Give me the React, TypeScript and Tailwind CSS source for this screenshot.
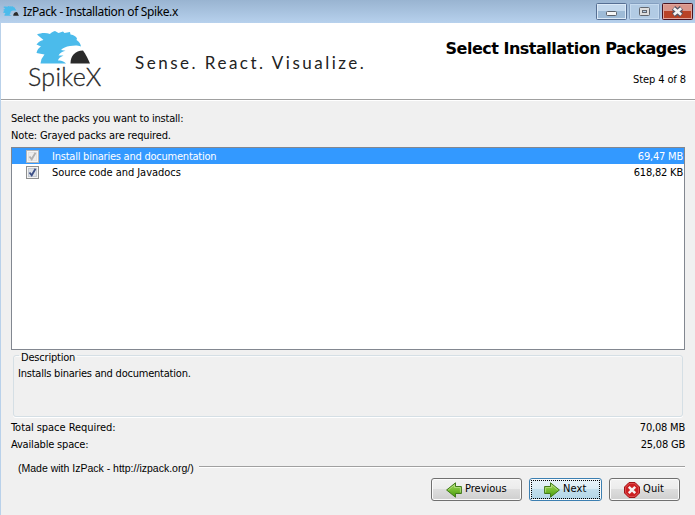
import React from "react";

const Hedgehog = ({ className }: { className: string }) => (
  <svg className={className} viewBox="0 0 54 33" preserveAspectRatio="none">
    <path
      fill="#4bbbeb"
      d="M4.5 32.5 L5.5 28 L8.5 23.5 L.5 22 C1 19 2.5 17 5 15.5 L.5 13.5 C3 10.5 5 9.5 7.5 9 L1 3.5 C5 1.8 10 1.5 14 3 C15 1.5 17 .5 19 0 L22.5 2 L27 .5 L28.5 2 L34 1 L34.5 3.5 C38 4 40 5.5 41 7.5 L40.5 9 C43 10.5 44.5 12.5 45 15.5 C41 14 38 14.5 34 15 C30 15.5 27 17 25 19 L29.5 19.8 C26 20.5 24 22 22.5 24.5 L27.5 24.5 C24 26 22.5 27.5 22 29.5 C24 29.5 28 30 30 32.5 Z"
    />
    <path fill="#2b2b2b" d="M34.5 32.5 C34.5 25 39 19.5 47 19.5 C49.5 22.5 52 28 54 32.5 Z" />
  </svg>
);

const Check = ({ color, soft }: { color: string; soft?: boolean }) => (
  <svg className="block h-[13px] w-[13px] shrink-0" viewBox="0 0 13 13">
    <rect x=".5" y=".5" width="12" height="12" fill="#f4f4f4" stroke={soft ? "#b5b5b5" : "#8e8f8f"} />
    <rect x="2.5" y="2.5" width="8" height="8" fill={soft ? "#ededed" : "#dde1e7"} stroke={soft ? "#e2e2e2" : "#c3c9d1"} />
    <path d="M3.5 6.5 L5.7 9.3 L9.5 2.8" fill="none" stroke={color} strokeWidth="1.8" />
  </svg>
);

const Arrow = ({ flip }: { flip?: boolean }) => (
  <svg className={flip ? "h-4 w-4 shrink-0 -scale-x-100" : "h-4 w-4 shrink-0"} viewBox="0 0 16 16">
    <defs>
      <linearGradient id="leaf" x1="0" y1="0" x2="0" y2="1">
        <stop offset="0" stopColor="#a2d762" />
        <stop offset=".5" stopColor="#76bd31" />
        <stop offset="1" stopColor="#479a0b" />
      </linearGradient>
    </defs>
    <path d="M.6 4.5 H6.5 V.8 L15.4 8 L6.5 15.2 V11.5 H.6 Z" fill="url(#leaf)" stroke="#42791b" />
    <path d="M1.6 10.5 V5.5 H7.5 V2.9 L13.8 8" fill="none" stroke="#b9e088" strokeWidth=".8" />
  </svg>
);

const Stop = () => (
  <svg className="h-4 w-4 shrink-0" viewBox="0 0 16 16">
    <path d="M5 .5 H11 L15.5 5 V11 L11 15.5 H5 L.5 11 V5 Z" fill="#cc1f22" stroke="#a01316" />
    <path d="M5.3 1.5 H10.7 L14.5 5.3 V10.7 L10.7 14.5 H5.3 L1.5 10.7 V5.3 Z" fill="none" stroke="#e05557" strokeWidth=".8" />
    <path d="M4.8 4.8 L11.2 11.2 M11.2 4.8 L4.8 11.2" stroke="#f6f0f0" strokeWidth="2.5" />
  </svg>
);

const shell = "flex items-center rounded-[3px] border shadow-[inset_0_0_0_1px_#fbfbfb]";
const gray = "border-[#707070] bg-[linear-gradient(#f2f2f2,#ebebeb_50%,#dddddd_50%,#cfcfcf)]";

export default function App() {
  return (
    <div className="flex h-[515px] w-[695px] flex-col overflow-hidden bg-[#f0f0f0] font-['DejaVu_Sans_Condensed','DejaVu_Sans',sans-serif] text-[11px] leading-[17px] whitespace-nowrap text-black">
      <div className="flex h-[23px] shrink-0 bg-linear-to-b from-[#99b4d1] to-[#b7d1ed] pl-[3px]">
        <Hedgehog className="mt-[6px] h-[10px] w-4" />
        <span className="mt-[3px] ml-[4px] font-['Noto_Sans',sans-serif] text-[12px] tracking-[-0.37px]">IzPack - Installation of Spike.x</span>
        <div className="mt-[3px] mr-[2px] ml-auto flex gap-[2px]">
          <svg className="h-[17px] w-[31px]" viewBox="0 0 31 17">
            <rect x=".5" y=".5" width="30" height="16" rx="1" fill="#c3d8ed" stroke="#566f93" />
            <rect x="1.5" y="8" width="28" height="7.5" fill="#9ebbd7" />
            <rect x="1.5" y="1.5" width="28" height="14" fill="none" stroke="#dbe9f7" />
            <rect x="10.5" y="8.5" width="10" height="4" rx="1" fill="#f6f6f6" stroke="#5a6069" />
          </svg>
          <svg className="h-[17px] w-[31px]" viewBox="0 0 31 17">
            <rect x=".5" y=".5" width="30" height="16" rx="1" fill="#b2cbe4" stroke="#849fc0" />
            <rect x="1.5" y="1.5" width="28" height="14" fill="none" stroke="#c5daef" />
            <rect x="10.5" y="4.5" width="10" height="8" rx="1" fill="#dedede" stroke="#62676f" />
            <rect x="13.5" y="7.5" width="4" height="2" fill="#b2cbe4" stroke="#62676f" />
          </svg>
          <svg className="h-[17px] w-[31px]" viewBox="0 0 31 17">
            <rect x=".5" y=".5" width="30" height="16" rx="1" fill="#d9968b" stroke="#4a1420" />
            <rect x="1" y="8" width="29" height="8" fill="#b94327" />
            <rect x="1.5" y="1.5" width="28" height="14" fill="none" stroke="#e0a69c" />
            <path d="M11.5 5 L19.5 12 M19.5 5 L11.5 12" stroke="#535666" strokeWidth="5" />
            <path d="M11.8 5.3 L19.2 11.7 M19.2 5.3 L11.8 11.7" stroke="#f4f4f4" strokeWidth="2.7" />
          </svg>
        </div>
      </div>

      <div className="flex flex-1 flex-col border-l border-[#b9d1ea]">
        <header className="flex h-[77px] shrink-0 border-b border-[#a0a0a0] bg-white shadow-[0_1px_0_#fff]">
          <div className="w-[130px] pt-[8px] pl-[27px]">
            <Hedgehog className="ml-[8px] h-[33px] w-[54px]" />
            <div className="mt-[-1px] font-[Lato,sans-serif] text-[25px] leading-[26px] font-light tracking-[0.3px] text-[#222] [-webkit-text-stroke:0.3px_#333]">SpikeX</div>
          </div>
          <div className="mt-[29px] ml-[4px] font-[Lato,sans-serif] text-[17px] leading-[22px] tracking-[2.5px] text-[#222]">Sense. React. Visualize.</div>
          <div className="mr-[9px] ml-auto flex flex-col items-end">
            <h1 className="mt-[15px] font-['DejaVu_Sans',sans-serif] text-[16px] leading-[22px] font-bold tracking-[-0.5px]">Select Installation Packages</h1>
            <span className="mt-[11px] tracking-[-0.1px]">Step 4 of 8</span>
          </div>
        </header>

        <main className="flex flex-1 flex-col pr-[10px] pl-[10px]">
          <div className="mt-[10px] tracking-[-0.2px]">Select the packs you want to install:</div>
          <div className="tracking-[-0.15px]">Note: Grayed packs are required.</div>

          <div className="mt-[3px] h-[203px] shrink-0 border border-[#828790] bg-white">
            <div className="flex h-4 items-center bg-[#3399ff] pr-[1px] pl-[14px] text-white">
              <Check color="#b0b0b0" soft />
              <span className="ml-[13px] tracking-[-0.23px]">Install binaries and documentation</span>
              <span className="ml-auto tracking-[-0.2px]">69,47 MB</span>
            </div>
            <div className="flex h-4 items-center pr-[1px] pl-[14px]">
              <Check color="#3c4f86" />
              <span className="ml-[13px] tracking-[-0.04px]">Source code and Javadocs</span>
              <span className="ml-auto tracking-[-0.2px]">618,82 KB</span>
            </div>
          </div>

          <fieldset className="mt-[-2px] mr-[2px] ml-[2px] h-[69px] shrink-0 rounded-[3px] border border-[#d5dfe5] px-[4px] shadow-[0_1px_0_#fff,inset_0_1px_0_#fafafa]">
            <legend className="ml-[1px] h-[15px] px-[2px] leading-[19px] tracking-[-0.2px]">Description</legend>
            <div className="mt-[2px] tracking-[-0.22px]">Installs binaries and documentation.</div>
          </fieldset>

          <div className="mt-[2px] flex justify-between"><span className="tracking-[-0.05px]">Total space Required:</span><span className="tracking-[-0.2px]">70,08 MB</span></div>
          <div className="flex justify-between"><span className="tracking-[-0.18px]">Available space:</span><span className="tracking-[-0.2px]">25,08 GB</span></div>

          <div className="mt-[7px] flex items-center pl-[7px]">
            <span className="font-['Liberation_Sans',sans-serif] text-[10.5px]">(Made with IzPack - http://izpack.org/)</span>
            <div className="mt-[-3px] ml-[5px] h-[2px] flex-1 border-t border-b border-t-[#a0a0a0] border-b-white" />
          </div>

          <div className="mt-[1px] mr-[5px] flex justify-end gap-[7px]">
            <button className={`${shell} ${gray} h-[23px] w-[91px] pl-[14px]`}>
              <Arrow flip /><span className="-mt-[3px] ml-[3px]">Previous</span>
            </button>
            <button className={`${shell} h-[23px] w-[73px] border-[#3c7fb1] bg-[linear-gradient(#e8f3f9,#d9ebf4_50%,#c2dfed_50%,#b2d5e6)] p-px`}>
              <span className="flex h-full w-full items-center border border-dotted border-black pl-[12px]"><Arrow /><span className="-mt-[3px] ml-[3px] tracking-[0.1px]">Next</span></span>
            </button>
            <button className={`${shell} ${gray} h-[23px] w-[71px] pl-[14px]`}>
              <Stop /><span className="-mt-[3px] ml-[3px] tracking-[0.1px]">Quit</span>
            </button>
          </div>
        </main>
      </div>
    </div>
  );
}
